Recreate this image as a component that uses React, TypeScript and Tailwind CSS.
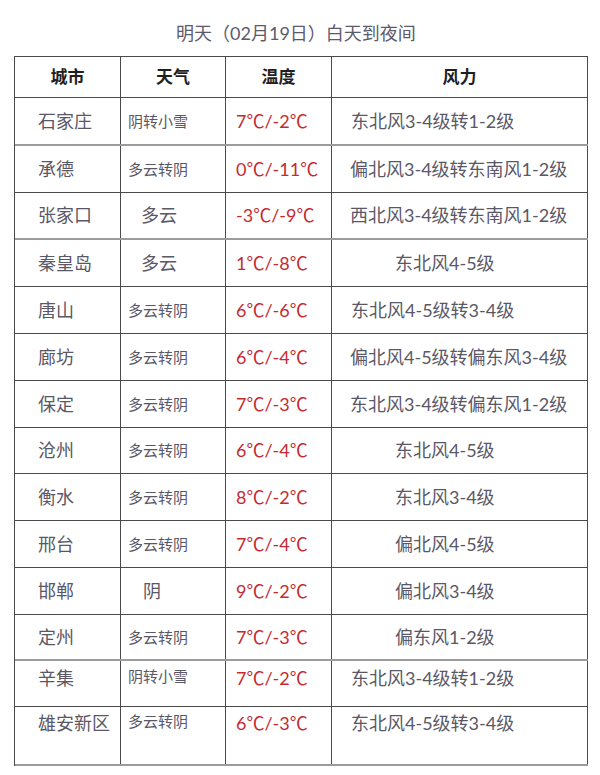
import React from "react";

interface Row {
  city: string;
  weather: string;
  temp: string;
  wind: string;
  weatherPad: string;
  windPad: string;
  height: string;
  top?: string;
  grayLine?: boolean;
}

const FONT = { fontFamily: '"Lato", "Noto Sans CJK SC", sans-serif' };

const ROWS: Row[] = [
  { city: "石家庄", weather: "阴转小雪", temp: "7℃/-2℃", wind: "东北风3-4级转1-2级", weatherPad: "pl-[7px] text-[15px]", windPad: "pl-[19px]", height: "h-[48px]", grayLine: true },
  { city: "承德", weather: "多云转阴", temp: "0℃/-11℃", wind: "偏北风3-4级转东南风1-2级", weatherPad: "pl-[7px] text-[15px]", windPad: "pl-[18px]", height: "h-[47px]" },
  { city: "张家口", weather: "多云", temp: "-3℃/-9℃", wind: "西北风3-4级转东南风1-2级", weatherPad: "pl-[20px] text-[18px]", windPad: "pl-[18px]", height: "h-[47px]", grayLine: true },
  { city: "秦皇岛", weather: "多云", temp: "1℃/-8℃", wind: "东北风4-5级", weatherPad: "pl-[20px] text-[18px]", windPad: "pl-[63px]", height: "h-[47px]" },
  { city: "唐山", weather: "多云转阴", temp: "6℃/-6℃", wind: "东北风4-5级转3-4级", weatherPad: "pl-[7px] text-[15px]", windPad: "pl-[19px]", height: "h-[47px]" },
  { city: "廊坊", weather: "多云转阴", temp: "6℃/-4℃", wind: "偏北风4-5级转偏东风3-4级", weatherPad: "pl-[7px] text-[15px]", windPad: "pl-[18px]", height: "h-[47px]" },
  { city: "保定", weather: "多云转阴", temp: "7℃/-3℃", wind: "东北风3-4级转偏东风1-2级", weatherPad: "pl-[7px] text-[15px]", windPad: "pl-[18px]", height: "h-[47px]" },
  { city: "沧州", weather: "多云转阴", temp: "6℃/-4℃", wind: "东北风4-5级", weatherPad: "pl-[7px] text-[15px]", windPad: "pl-[63px]", height: "h-[46px]" },
  { city: "衡水", weather: "多云转阴", temp: "8℃/-2℃", wind: "东北风3-4级", weatherPad: "pl-[7px] text-[15px]", windPad: "pl-[63px]", height: "h-[47px]" },
  { city: "邢台", weather: "多云转阴", temp: "7℃/-4℃", wind: "偏北风4-5级", weatherPad: "pl-[7px] text-[15px]", windPad: "pl-[63px]", height: "h-[47px]" },
  { city: "邯郸", weather: "阴", temp: "9℃/-2℃", wind: "偏北风3-4级", weatherPad: "pl-[22px] text-[18px]", windPad: "pl-[63px]", height: "h-[47px]" },
  { city: "定州", weather: "多云转阴", temp: "7℃/-3℃", wind: "偏东风1-2级", weatherPad: "pl-[7px] text-[15px]", windPad: "pl-[63px]", height: "h-[46px]", grayLine: true },
  { city: "辛集", weather: "阴转小雪", temp: "7℃/-2℃", wind: "东北风3-4级转1-2级", weatherPad: "pl-[7px] text-[15px]", windPad: "pl-[19px]", height: "h-[46px]", top: "pt-[4px]" },
  { city: "雄安新区", weather: "多云转阴", temp: "6℃/-3℃", wind: "东北风4-5级转3-4级", weatherPad: "pl-[7px] text-[15px]", windPad: "pl-[19px]", height: "h-[59px]", top: "pt-[3px]", grayLine: true },
];

const HEAD = ["城市", "天气", "温度", "风力"];
const COLS = "grid grid-cols-[106px_105px_106px_256px]";

function Cell({ children, className }: { children: React.ReactNode; className: string }) {
  return <div className={`flex border-r border-[#4a4a4a] ${className}`}>{children}</div>;
}

export default function App() {
  return (
    <div className="w-[600px] h-[775px] bg-white overflow-hidden" style={FONT}>
      <div className="pt-[20px] h-[56px] text-center text-[18px] leading-[26px] text-[#5d5a6c] pr-[8px]">
        明天（02月19日）白天到夜间
      </div>
      <div className="ml-[14px] w-[574px] border-l border-t border-[#4a4a4a]">
        {/* header */}
        <div className={`${COLS} h-[41px] border-b border-[#4a4a4a]`}>
          {HEAD.map((h) => (
            <Cell key={h} className="items-center justify-center text-[17px] font-bold text-[#1f1f1f]">
              {h}
            </Cell>
          ))}
        </div>
        {ROWS.map((r) => {
          const align = r.top ? `items-start ${r.top}` : "items-center";
          return (
            <div
              key={r.city}
              className={`${COLS} ${r.height} ${r.grayLine ? "border-b-2 border-[#9c9c9c]" : "border-b border-[#4a4a4a]"}`}
            >
              <Cell className={`${align} pl-[23px] text-[18px] text-[#5a5766]`}>{r.city}</Cell>
              <Cell className={`${align} ${r.weatherPad} text-[#5a5766]`}>{r.weather}</Cell>
              <Cell className={`${align} pl-[10px] text-[18px] text-[#c62a2f]`}>{r.temp}</Cell>
              <Cell className={`${align} ${r.windPad} text-[18px] text-[#5a5766] whitespace-nowrap`}>{r.wind}</Cell>
            </div>
          );
        })}
      </div>
    </div>
  );
}
